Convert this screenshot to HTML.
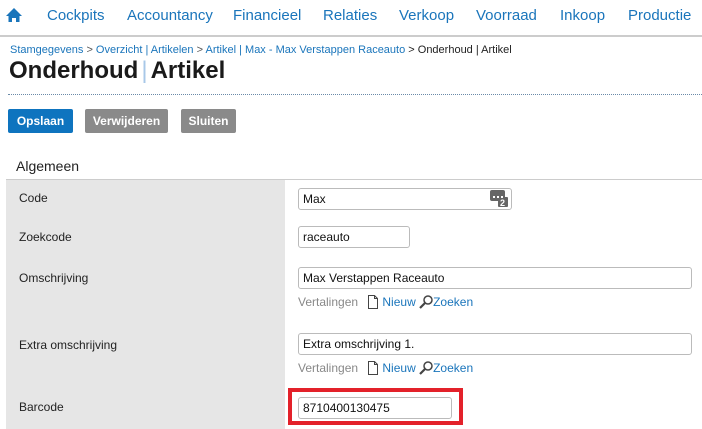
<!DOCTYPE html>
<html><head><meta charset="utf-8"><style>
*{box-sizing:border-box;margin:0;padding:0}
body{width:702px;height:429px;overflow:hidden;background:#fff;font-family:"Liberation Sans",Arial,sans-serif;position:relative;color:#222}
.a{position:absolute;white-space:nowrap}
.nav{font-size:15px;color:#1a75bb;top:7px}
.btn{position:absolute;top:109px;height:24px;color:#fff;font-size:12px;font-weight:bold;line-height:24px;text-align:center;border-radius:2px}
.lbl{position:absolute;left:19px;font-size:12px;color:#222}
.inp{position:absolute;left:298px;height:22px;border:1px solid #bbb;border-radius:3px;font-size:12px;padding-left:4px;line-height:20px;color:#111;background:#fff}
.tr{position:absolute;left:298px;font-size:12px;color:#888}
.tr b{font-weight:normal;color:#1a75bb}
</style></head><body>
<svg class="a" style="left:6px;top:7px" width="16" height="16" viewBox="0 0 16 16"><path d="M8 1 L16 9 L13.5 9 L13.5 15 L10 15 L10 11 L6 11 L6 15 L2.5 15 L2.5 9 L0 9 Z" fill="#1a75bb"/></svg>
<div class="a nav" style="left:47px">Cockpits</div>
<div class="a nav" style="left:127px">Accountancy</div>
<div class="a nav" style="left:233px">Financieel</div>
<div class="a nav" style="left:323px">Relaties</div>
<div class="a nav" style="left:399px">Verkoop</div>
<div class="a nav" style="left:476px">Voorraad</div>
<div class="a nav" style="left:560px">Inkoop</div>
<div class="a nav" style="left:628px">Productie</div>
<div class="a" style="left:0;top:35px;width:702px;height:2px;background:#ccc"></div>
<div class="a" style="left:10px;top:44px;font-size:11px;color:#1a75bb">Stamgegevens <span style="color:#555">&gt;</span> Overzicht | Artikelen <span style="color:#555">&gt;</span> Artikel | Max - Max Verstappen Raceauto <span style="color:#222">&gt; Onderhoud | Artikel</span></div>
<div class="a" style="left:9px;top:57px;font-size:24px;font-weight:bold;color:#1a1a1a">Onderhoud<span style="color:#a8c8e8;font-weight:normal;margin:0 3px">|</span>Artikel</div>
<div class="a" style="left:8px;top:94px;width:694px;border-top:1px dotted #6a8aa8"></div>
<div class="btn" style="left:8px;width:65px;background:#0e74bf">Opslaan</div>
<div class="btn" style="left:85px;width:83px;background:#8a8a8a">Verwijderen</div>
<div class="btn" style="left:181px;width:55px;background:#8a8a8a">Sluiten</div>
<div class="a" style="left:16px;top:158px;font-size:14px;color:#222">Algemeen</div>
<div class="a" style="left:6px;top:179px;width:696px;height:1px;background:#ccc"></div>
<div class="a" style="left:6px;top:180px;width:279px;height:249px;background:#e6e6e6"></div>
<div class="lbl" style="top:191px">Code</div>
<div class="lbl" style="top:230px">Zoekcode</div>
<div class="lbl" style="top:271px">Omschrijving</div>
<div class="lbl" style="top:338px">Extra omschrijving</div>
<div class="lbl" style="top:400px">Barcode</div>
<div class="inp" style="top:188px;width:214px">Max</div>
<svg class="a" style="left:490px;top:190px" width="19" height="18" viewBox="0 0 19 18"><rect x="0" y="0" width="15" height="11" rx="2" fill="#666"/><rect x="8" y="7" width="10" height="10" rx="1" fill="#666"/><text x="10" y="16" font-size="9" font-weight="bold" fill="#fff" font-family="Liberation Sans">2</text><rect x="3" y="6" width="2" height="2" fill="#fff"/><rect x="7" y="6" width="2" height="2" fill="#fff"/><rect x="11" y="6" width="2" height="2" fill="#fff"/></svg>
<div class="inp" style="top:226px;width:112px">raceauto</div>
<div class="inp" style="top:267px;width:394px">Max Verstappen Raceauto</div>
<div class="tr" style="top:295px">Vertalingen <svg width="12" height="14" viewBox="0 0 12 14" style="vertical-align:-3px;margin:0 3px 0 6px"><path d="M1.5 0.5 H7.5 L10.5 3.5 V13.5 H1.5 Z M7.5 0.5 V3.5 H10.5" fill="none" stroke="#444"/></svg><b>Nieuw</b> <svg width="14" height="14" viewBox="0 0 14 14" style="vertical-align:-3px"><circle cx="9" cy="5" r="4" fill="none" stroke="#444" stroke-width="1.5"/><path d="M6 8 L1 13" stroke="#444" stroke-width="2.2"/></svg><b>Zoeken</b></div>
<div class="inp" style="top:333px;width:394px">Extra omschrijving 1.</div>
<div class="tr" style="top:361px">Vertalingen <svg width="12" height="14" viewBox="0 0 12 14" style="vertical-align:-3px;margin:0 3px 0 6px"><path d="M1.5 0.5 H7.5 L10.5 3.5 V13.5 H1.5 Z M7.5 0.5 V3.5 H10.5" fill="none" stroke="#444"/></svg><b>Nieuw</b> <svg width="14" height="14" viewBox="0 0 14 14" style="vertical-align:-3px"><circle cx="9" cy="5" r="4" fill="none" stroke="#444" stroke-width="1.5"/><path d="M6 8 L1 13" stroke="#444" stroke-width="2.2"/></svg><b>Zoeken</b></div>
<div class="a" style="left:288px;top:388px;width:175px;height:37px;border:4px solid #e3212a"></div>
<div class="inp" style="top:397px;width:154px">8710400130475</div>
</body></html>
